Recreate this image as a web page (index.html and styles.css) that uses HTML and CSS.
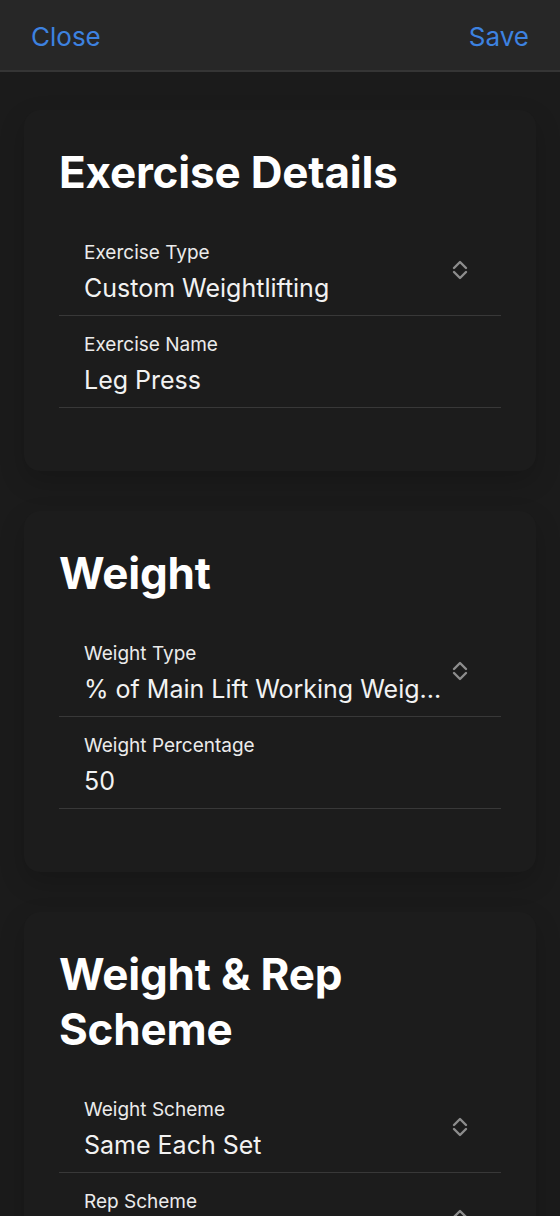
FILE: index.html
```html
<!DOCTYPE html>
<html lang="en">
<head>
<meta charset="utf-8">
<title>Edit Exercise</title>
<link rel="stylesheet" href="styles.css">
</head>
<body>
<header class="nav">
  <span class="nav-btn">Close</span>
  <span class="nav-btn">Save</span>
</header>
<main class="content">
  <section class="card">
    <h2 class="card-title">Exercise Details</h2>
    <div class="row">
      <div class="row-text">
        <div class="label">Exercise Type</div>
        <div class="value">Custom Weightlifting</div>
      </div>
      <svg class="chev" viewBox="0 0 16 22" width="16" height="22"><path d="M2 9 L8 3 L14 9 M2 13 L8 19 L14 13" fill="none" stroke="#8d8d8d" stroke-width="2.4" stroke-linecap="round" stroke-linejoin="round"/></svg>
    </div>
    <div class="row">
      <div class="row-text">
        <div class="label">Exercise Name</div>
        <div class="value">Leg Press</div>
      </div>
    </div>
  </section>
  <section class="card">
    <h2 class="card-title">Weight</h2>
    <div class="row">
      <div class="row-text">
        <div class="label">Weight Type</div>
        <div class="value">% of Main Lift Working Weig...</div>
      </div>
      <svg class="chev" viewBox="0 0 16 22" width="16" height="22"><path d="M2 9 L8 3 L14 9 M2 13 L8 19 L14 13" fill="none" stroke="#8d8d8d" stroke-width="2.4" stroke-linecap="round" stroke-linejoin="round"/></svg>
    </div>
    <div class="row">
      <div class="row-text">
        <div class="label">Weight Percentage</div>
        <div class="value">50</div>
      </div>
    </div>
  </section>
  <section class="card">
    <h2 class="card-title">Weight &amp; Rep<br>Scheme</h2>
    <div class="row">
      <div class="row-text">
        <div class="label">Weight Scheme</div>
        <div class="value">Same Each Set</div>
      </div>
      <svg class="chev" viewBox="0 0 16 22" width="16" height="22"><path d="M2 9 L8 3 L14 9 M2 13 L8 19 L14 13" fill="none" stroke="#8d8d8d" stroke-width="2.4" stroke-linecap="round" stroke-linejoin="round"/></svg>
    </div>
    <div class="row">
      <div class="row-text">
        <div class="label">Rep Scheme</div>
        <div class="value value-empty"></div>
      </div>
      <svg class="chev" viewBox="0 0 16 22" width="16" height="22"><path d="M2 9 L8 3 L14 9 M2 13 L8 19 L14 13" fill="none" stroke="#8d8d8d" stroke-width="2.4" stroke-linecap="round" stroke-linejoin="round"/></svg>
    </div>
  </section>
</main>
</body>
</html>
```

FILE: styles.css
```css
html, body {
  margin: 0;
  padding: 0;
}
body {
  background: #1b1b1b;
  font-family: Inter, "Noto Sans", "Liberation Sans", sans-serif;
  color: #f2f2f2;
  width: 560px;
  height: 1216px;
  overflow: hidden;
}
.nav {
  background: #272727;
  border-bottom: 2px solid #353535;
  display: flex;
  align-items: center;
  justify-content: space-between;
  padding: 0 31px;
  box-sizing: border-box;
  height: 72px;
}
.nav-btn {
  font-size: 26px;
  color: #3d82e0;
  line-height: 30px;
  margin-top: 4px;
}
.content {
  display: flex;
  flex-direction: column;
  gap: 40px;
  padding: 38px 24px 0;
}
.card {
  background: #1c1c1c;
  border-radius: 16px;
  box-shadow: 0 10px 26px rgba(0, 0, 0, 0.18);
  padding: 35px 35px 63px;
  display: flex;
  flex-direction: column;
}
.card-title {
  margin: 0 0 24px;
  font-size: 44px;
  font-weight: 700;
  line-height: 55px;
  color: #ffffff;
  letter-spacing: -0.2px;
}
.row {
  height: 92px;
  box-sizing: border-box;
  border-bottom: 1px solid #383838;
  display: flex;
  align-items: center;
  padding: 0 33px 0 25px;
}
.row-text {
  flex: 1;
  min-width: 0;
  padding-top: 4px;
}
.label {
  font-size: 19px;
  line-height: 23px;
  color: #ebebeb;
}
.value {
  font-size: 25px;
  line-height: 30px;
  margin-top: 9px;
  color: #f2f2f2;
  white-space: nowrap;
}
.value-empty {
  height: 30px;
}
.chev {
  flex: none;
  display: block;
}
```
